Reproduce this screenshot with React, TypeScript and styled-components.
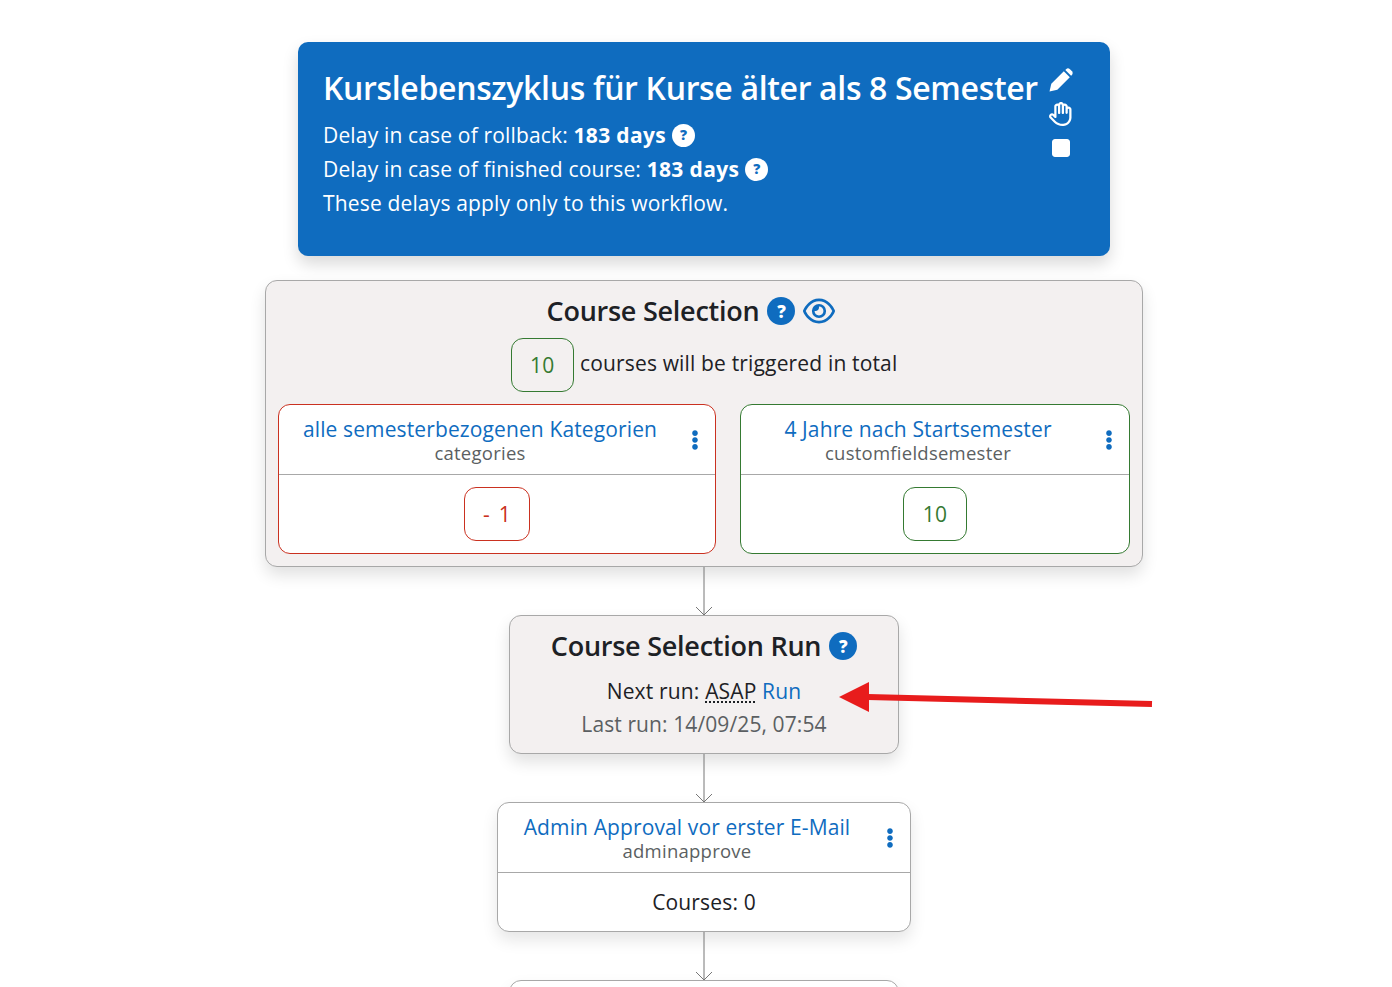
import React from 'react';
import styled, { createGlobalStyle } from 'styled-components';
import { FaRegHand, FaStop, FaRegEye } from 'react-icons/fa6';
import { FaEllipsisV } from 'react-icons/fa';

const Global = createGlobalStyle`
  html, body { margin: 0; padding: 0; background: #fff; overflow: hidden; height: 987px; }
  body { font-family: "Open Sans", "Noto Sans", sans-serif; color: #1d2125; }
  * { box-sizing: border-box; }
`;
const Page = styled.div`
  position: relative; height: 987px; overflow: hidden;
  display: flex; flex-direction: column; align-items: center; padding: 42px 0 0 16px;
`;
const Hero = styled.section`
  flex: none; width: 812px; height: 214px; margin-bottom: 24px; background: #0f6cbf; color: #fff;
  border-radius: 10px; padding: 24px 25px; box-shadow: 0 8px 16px rgba(0,0,0,.15);
  display: flex; justify-content: space-between;
`;
const HeroTitle = styled.h1`
  margin: 0 0 8px; font-size: 32px; line-height: 44px; font-weight: 600; letter-spacing: -.34px; white-space: nowrap;
`;
const HeroLine = styled.div`
  font-size: 21px; line-height: 34px; letter-spacing: .16px; display: flex; align-items: center; gap: 6px; white-space: nowrap;
  b { font-weight: 700; letter-spacing: .35px; }
`;
const HeroTools = styled.div`
  width: 26px; margin-right: 11px; padding-top: 2px; display: flex; flex-direction: column; align-items: center; gap: 10px;
  svg { display: block; }
`;
const Dot = styled.span<{ $size: number; $inverse?: boolean }>`
  flex: none; display: inline-flex; align-items: center; justify-content: center;
  width: ${p => p.$size}px; height: ${p => p.$size}px; border-radius: 50%;
  background: ${p => (p.$inverse ? '#fff' : '#0f6cbf')}; color: ${p => (p.$inverse ? '#0f6cbf' : '#fff')};
  font-size: ${p => Math.round(p.$size * 0.62)}px; line-height: 1; font-weight: 800; letter-spacing: 0;
`;
const Panel = styled.section<{ $w: number; $h: number }>`
  flex: none; width: ${p => p.$w}px; height: ${p => p.$h}px; background: #f3f0f0; border: 1px solid #a8a8a8; border-radius: 12px;
  box-shadow: 0 8px 16px rgba(0,0,0,.12); padding-top: 12px; text-align: center;
`;
const PanelTitle = styled.h2<{ $trail?: number }>`
  margin: 0; padding-right: ${p => p.$trail ?? 0}px; font-size: 27px; line-height: 36px; font-weight: 600; letter-spacing: -.25px;
  display: flex; justify-content: center; align-items: center; gap: 8px; white-space: nowrap;
`;
const EyeIcon = styled(FaRegEye)`color: #0f6cbf; flex: none;`;
const TotalRow = styled.div`
  display: flex; justify-content: center; align-items: center; gap: 6px; margin-top: 9px; height: 54px; font-size: 21px; letter-spacing: .16px;
  > span:last-child { position: relative; top: -2px; }
`;
const Badge = styled.span<{ $tone: 'ok' | 'bad' }>`
  display: flex; align-items: center; justify-content: center; height: 54px; padding: 0 18.5px;
  border: 1px solid ${p => (p.$tone === 'ok' ? '#357a32' : '#ca3120')}; border-radius: 12px;
  color: ${p => (p.$tone === 'ok' ? '#357a32' : '#ca3120')}; font-size: 21px; letter-spacing: .18px;
  word-spacing: 3px; white-space: pre;
`;
const SubRow = styled.div`
  display: flex; gap: 24px; padding: 0 12px; margin-top: 12px; justify-content: space-between;
`;
const Step = styled.article<{ $w: number; $h?: number; $color?: string }>`
  flex: none; width: ${p => p.$w}px; height: ${p => p.$h ?? 150}px; background: #fff;
  border: 1px solid ${p => p.$color ?? '#a8a8a8'}; border-radius: 12px; overflow: hidden;
`;
const FlowStep = styled(Step)`box-shadow: 0 8px 16px rgba(0,0,0,.1);`;
const StepHead = styled.header`
  position: relative; height: 70px; border-bottom: 1px solid #a8a8a8; padding-top: 9px;
`;
const StepName = styled.div`
  margin-right: 34px; text-align: center;
`;
const StepTitle = styled.div`
  font-size: 21px; line-height: 30px; letter-spacing: .12px; color: #0f6cbf; white-space: nowrap;
`;
const StepType = styled.div`
  font-size: 18.5px; line-height: 18px; letter-spacing: .25px; color: #5b5f62;
`;
const Menu = styled(FaEllipsisV)`
  position: absolute; right: 10px; top: 25px; color: #0f6cbf; font-size: 20px;
`;
const StepBody = styled.div`
  height: 78px; display: flex; align-items: center; justify-content: center;
`;
const PlainBody = styled(StepBody)`
  height: 58px; font-size: 21px; letter-spacing: .16px;
`;
const RunLine = styled.div`
  font-size: 21px; line-height: 33px; letter-spacing: .16px; white-space: nowrap;
`;
const Muted = styled(RunLine)`color: #5b5f62; letter-spacing: .1px;`;
const FirstRun = styled(RunLine)`margin-top: 11px;`;
const Abbr = styled.abbr`text-decoration: underline dotted; text-underline-offset: 2px;`;
const RunLink = styled.a`color: #0f6cbf; text-decoration: none;`;
const ConnectorSvg = styled.svg`display: block; flex: none;`;
const RedArrow = styled.svg`position: absolute; left: 830px; top: 670px;`;

const Connector = () => (
  <ConnectorSvg width="18" height="48" viewBox="0 0 18 48">
    <path d="M9 0V48M1 40L9 48L17 40" fill="none" stroke="#777" strokeWidth="1" />
  </ConnectorSvg>
);

const PencilIcon = () => (
  <svg width="24" height="24" viewBox="0 0 24 24" fill="#fff">
    <path d="M.5 23.500L2.300 15.700L14.800 3.200L20.800 9.200L8.300 21.700Z" />
    <path d="M16.300 1.900L17.300 .9Q19 -.3 20.700 1L23 3.300Q24.300 5 23.100 6.700L22.100 7.700Z" />
  </svg>
);

function App() {
  return (
    <Page>
      <Global />
      <Hero>
        <div>
          <HeroTitle>Kurslebenszyklus für Kurse älter als 8 Semester</HeroTitle>
          <HeroLine><span>Delay in case of rollback: <b>183 days</b></span><Dot $size={23} $inverse>?</Dot></HeroLine>
          <HeroLine><span>Delay in case of finished course: <b>183 days</b></span><Dot $size={23} $inverse>?</Dot></HeroLine>
          <HeroLine><span>These delays apply only to this workflow.</span></HeroLine>
        </div>
        <HeroTools>
          <PencilIcon />
          <FaRegHand size={24} />
          <FaStop size={24} />
        </HeroTools>
      </Hero>
      <Panel $w={878} $h={287}>
        <PanelTitle $trail={26}>Course Selection <Dot $size={28}>?</Dot><EyeIcon size={32} /></PanelTitle>
        <TotalRow><Badge $tone="ok">10</Badge><span>courses will be triggered in total</span></TotalRow>
        <SubRow>
          <Step $w={438} $color="#ca3120">
            <StepHead>
              <StepName><StepTitle>alle semesterbezogenen Kategorien</StepTitle><StepType>categories</StepType></StepName>
              <Menu />
            </StepHead>
            <StepBody><Badge $tone="bad">- 1</Badge></StepBody>
          </Step>
          <Step $w={390} $color="#357a32">
            <StepHead>
              <StepName><StepTitle>4 Jahre nach Startsemester</StepTitle><StepType>customfieldsemester</StepType></StepName>
              <Menu />
            </StepHead>
            <StepBody><Badge $tone="ok">10</Badge></StepBody>
          </Step>
        </SubRow>
      </Panel>
      <Connector />
      <Panel $w={390} $h={139}>
        <PanelTitle>Course Selection Run <Dot $size={28}>?</Dot></PanelTitle>
        <FirstRun>Next run: <Abbr>ASAP</Abbr> <RunLink>Run</RunLink></FirstRun>
        <Muted>Last run: 14/09/25, 07:54</Muted>
      </Panel>
      <Connector />
      <FlowStep $w={414} $h={130}>
        <StepHead>
          <StepName><StepTitle>Admin Approval vor erster E-Mail</StepTitle><StepType>adminapprove</StepType></StepName>
          <Menu />
        </StepHead>
        <PlainBody>Courses: 0</PlainBody>
      </FlowStep>
      <Connector />
      <FlowStep $w={390} $h={100} />
      <RedArrow width="330" height="50" viewBox="0 0 330 50">
        <path d="M9 27L39 12V42Z" fill="#e81c1c" />
        <path d="M38 27L322 34" stroke="#e81c1c" strokeWidth="6" fill="none" />
      </RedArrow>
    </Page>
  );
}
export default App;
